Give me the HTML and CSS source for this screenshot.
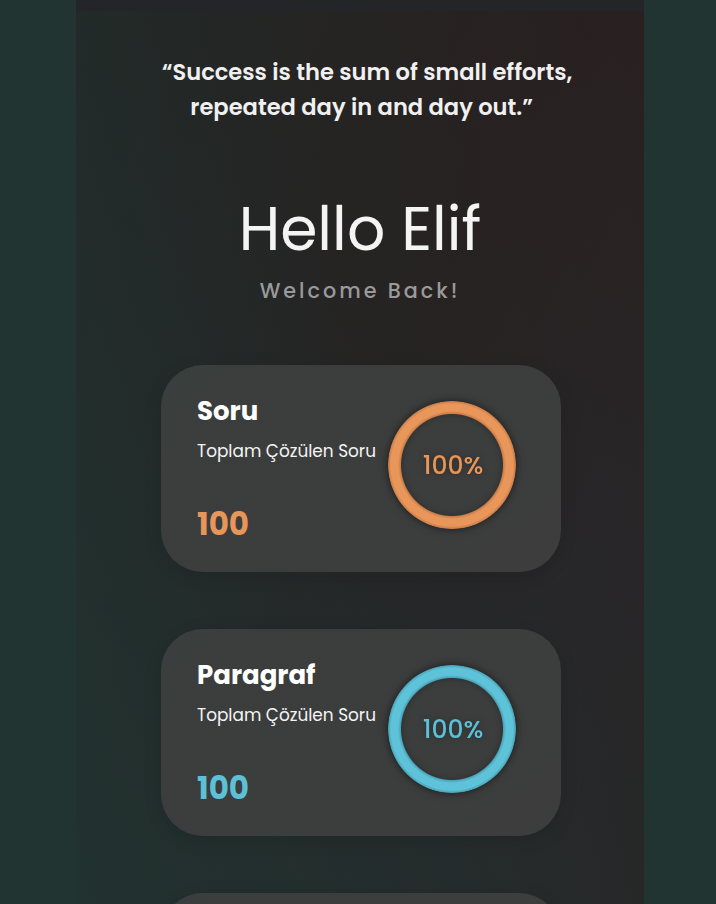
FILE: index.html
```html
<!DOCTYPE html>
<html lang="tr">
<head>
<meta charset="utf-8">
<title>Dashboard</title>
<link rel="stylesheet" href="styles.css">
</head>
<body>
<div class="page">
  <div class="topbar"></div>
  <main class="content">
    <p class="quote">“Success is the sum of small efforts,<br>repeated day in and day out.”&nbsp;&nbsp;</p>
    <h1 class="hello">Hello Elif</h1>
    <p class="welcome">Welcome Back!</p>
    <section class="cards">
      <div class="card orange">
        <div class="info">
          <h2 class="title">Soru</h2>
          <p class="sub">Toplam Çözülen Soru</p>
          <p class="num">100</p>
        </div>
        <div class="ring"><span>100%</span></div>
      </div>
      <div class="card cyan">
        <div class="info">
          <h2 class="title">Paragraf</h2>
          <p class="sub">Toplam Çözülen Soru</p>
          <p class="num">100</p>
        </div>
        <div class="ring"><span>100%</span></div>
      </div>
      <div class="card cyan">
        <div class="info">
          <h2 class="title">Problem</h2>
          <p class="sub">Toplam Çözülen Soru</p>
          <p class="num">100</p>
        </div>
        <div class="ring"><span>100%</span></div>
      </div>
    </section>
  </main>
</div>
</body>
</html>
```
FILE: styles.css
```css
* { box-sizing: border-box; }
html, body { margin: 0; padding: 0; }
body {
  background: #223432;
  font-family: "Poppins", "Open Sans", "DejaVu Sans", sans-serif;
  color: #f2f2f2;
  height: 904px;
  overflow: hidden;
}
.page {
  width: 568px;
  margin-left: 76px;
  min-height: 904px;
  background: linear-gradient(to bottom right, #222826 0%, #262323 45%, #27282a 70%, #272727 100%);
  position: relative;
}
.page::before {
  content: "";
  position: absolute;
  inset: 0;
  background: linear-gradient(to top right, #213432 0%, rgba(33,52,50,0.6) 30%, rgba(33,52,50,0) 60%, rgba(43,30,30,0.6) 100%);
  pointer-events: none;
}
.topbar {
  height: 11px;
  background: #232528;
  position: relative;
  z-index: 1;
}
.content {
  position: relative;
  z-index: 1;
  display: flex;
  flex-direction: column;
  align-items: center;
  padding-top: 44px;
}
.quote {
  margin: 0;
  padding-left: 14px;
  text-align: center;
  font-size: 22.6px;
  font-weight: 600;
  line-height: 35px;
  color: #f0f0f0;
}
.hello {
  margin: 71px 0 0;
  font-size: 60px;
  font-weight: 400;
  line-height: 66px;
  color: #f4f4f4;
}
.welcome {
  margin: 13px 0 0;
  font-size: 20.7px;
  font-weight: 500;
  letter-spacing: 3px;
  color: #9a9a9a;
}
.cards {
  margin-top: 59px;
  display: flex;
  flex-direction: column;
  gap: 57px;
  margin-left: 2px;
}
.card {
  width: 400px;
  height: 207px;
  border-radius: 42px;
  background: linear-gradient(135deg, #3a3e3d 0%, #3c3d3d 50%, #3d3d3d 100%);
  box-shadow: 0 4px 18px rgba(0,0,0,0.12);
  display: flex;
  justify-content: space-between;
  padding: 30px 45px 0 36px;
}
.info { display: flex; flex-direction: column; }
.title {
  margin: 0;
  font-size: 26px;
  font-weight: 700;
  line-height: 32px;
  color: #ffffff;
}
.sub {
  margin: 14px 0 0;
  font-size: 16.9px;
  font-weight: 400;
  line-height: 20px;
  color: #f4f4f4;
}
.num {
  margin: 45px 0 0;
  font-size: 31px;
  font-weight: 700;
  line-height: 36px;
}
.ring {
  margin-top: 6px;
  width: 128px;
  height: 128px;
  border-radius: 50%;
  display: flex;
  align-items: center;
  justify-content: center;
  padding-left: 2px;
  background: radial-gradient(circle closest-side, transparent 50.5px, var(--dark) 51.5px, var(--ring) 54px, var(--ring) 61px, var(--dark) 63.5px, transparent 64.5px);
  box-shadow: 0 0 8px rgba(0,0,0,0.3), inset 0 0 0 13px transparent;
  filter: drop-shadow(0 0 3px rgba(0,0,0,0.3));
}
.ring span {
  font-size: 25px;
  font-weight: 500;
  margin-top: 2px;
}
.orange { --ring: #e8965a; --dark: #c97d48; }
.cyan { --ring: #5ec2d9; --dark: #4aa3b8; }
.orange .num, .orange .ring span { color: #e8955a; }
.cyan .num, .cyan .ring span { color: #5cc0d8; }
```
